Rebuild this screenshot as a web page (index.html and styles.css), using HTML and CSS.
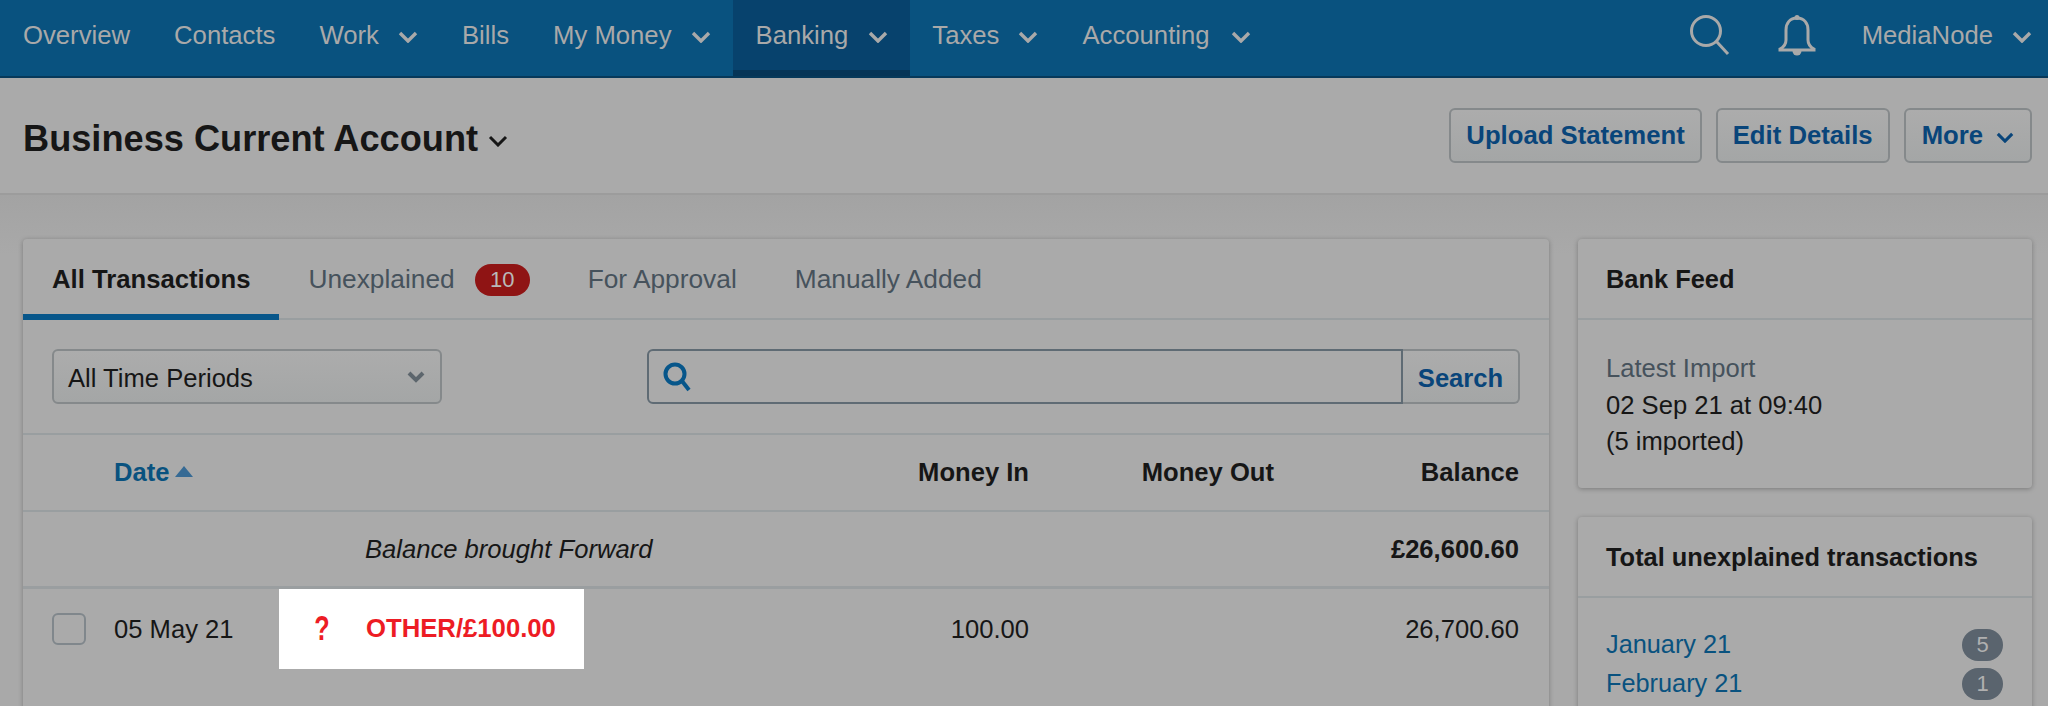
FILE: index.html
```html
<!DOCTYPE html>
<html lang="en">
<head>
<meta charset="utf-8">
<title>Business Current Account</title>
<link rel="stylesheet" href="styles.css">
</head>
<body>
<nav class="topnav">
  <ul class="menu">
    <li class="menu-item">Overview</li>
    <li class="menu-item">Contacts</li>
    <li class="menu-item">Work <svg class="chev" viewBox="0 0 20 12"><path d="M2 2l8 8 8-8"/></svg></li>
    <li class="menu-item">Bills</li>
    <li class="menu-item">My Money <svg class="chev" viewBox="0 0 20 12"><path d="M2 2l8 8 8-8"/></svg></li>
    <li class="menu-item active">Banking <svg class="chev" viewBox="0 0 20 12"><path d="M2 2l8 8 8-8"/></svg></li>
    <li class="menu-item">Taxes <svg class="chev" viewBox="0 0 20 12"><path d="M2 2l8 8 8-8"/></svg></li>
    <li class="menu-item">Accounting <svg class="chev" viewBox="0 0 20 12"><path d="M2 2l8 8 8-8"/></svg></li>
  </ul>
  <div class="nav-right">
    <svg class="nav-search" viewBox="0 0 42 42"><circle cx="17" cy="17" r="14.5"/><path d="M27.5 27.5L39 40"/></svg>
    <svg class="nav-bell" viewBox="0 0 40 42"><path d="M20 4c-7 0-11 5-11 12v10c0 4-2 7-6 9v1h34v-1c-4-2-6-5-6-9V16c0-7-4-12-11-12z"/><circle class="fill" cx="20" cy="3.5" r="2.5"/><path class="fill" d="M15.500 37h9a4.500 4.500 0 0 1-9 0z"/></svg>
    <span class="nav-user">MediaNode <svg class="chev" viewBox="0 0 20 12"><path d="M2 2l8 8 8-8"/></svg></span>
  </div>
</nav>

<header class="titlebar">
  <h1 class="page-title">Business Current Account <svg class="title-chev" viewBox="0 0 20 12"><path d="M2 2l8 8 8-8"/></svg></h1>
  <div class="actions">
    <button class="btn">Upload Statement</button>
    <button class="btn">Edit Details</button>
    <button class="btn btn-more">More <svg class="btn-chev" viewBox="0 0 20 12"><path d="M2 2l8 8 8-8"/></svg></button>
  </div>
</header>

<main class="content">
  <section class="card main-card">
    <div class="tabs">
      <span class="tab current">All Transactions</span>
      <span class="tab">Unexplained <span class="count">10</span></span>
      <span class="tab">For Approval</span>
      <span class="tab">Manually Added</span>
    </div>
    <div class="filters">
      <div class="select"><span class="select-label">All Time Periods</span> <svg class="select-chev" viewBox="0 0 20 14"><path d="M3 3l7 7 7-7"/></svg></div>
      <div class="searchbox">
        <div class="search-input"><svg class="search-icon" viewBox="0 0 28 30"><circle cx="12" cy="12" r="9.500"/><path d="M19 19l7 9"/></svg></div>
        <div class="search-btn">Search</div>
      </div>
    </div>
    <div class="row head">
      <span></span>
      <span class="sort">Date <i class="arrow"></i></span>
      <span></span>
      <span class="num">Money In</span>
      <span class="num">Money Out</span>
      <span class="num">Balance</span>
    </div>
    <div class="row brought">
      <span></span>
      <span></span>
      <span class="desc"><em>Balance brought Forward</em></span>
      <span></span>
      <span></span>
      <span class="num strong">£26,600.60</span>
    </div>
    <div class="row entry">
      <span class="check"><i class="box"></i></span>
      <span>05 May 21</span>
      <span class="highlight"><b class="q">?</b><b class="other">OTHER/£100.00</b></span>
      <span class="num">100.00</span>
      <span></span>
      <span class="num">26,700.60</span>
    </div>
  </section>

  <aside class="side">
    <section class="card">
      <h2 class="card-title">Bank Feed</h2>
      <div class="feed">
        <div class="muted">Latest Import</div>
        <div>02 Sep 21 at 09:40</div>
        <div>(5 imported)</div>
      </div>
    </section>
    <section class="card">
      <h2 class="card-title">Total unexplained transactions</h2>
      <ul class="months">
        <li class="month"><a class="link">January 21</a><span class="pill">5</span></li>
        <li class="month"><a class="link">February 21</a><span class="pill">1</span></li>
      </ul>
    </section>
  </aside>
</main>
</body>
</html>
```
FILE: styles.css
```css
* { box-sizing: border-box; }
html, body { margin: 0; height: 706px; overflow: hidden; }
body {
  background: #a8a8a8;
  font-family: "Liberation Sans", Arial, sans-serif;
  font-size: 25.6px;
  line-height: 39px;
  color: #161616;
}
svg { fill: none; stroke: currentColor; }

.topnav {
  height: 78px;
  background: #09527f;
  border-bottom: 2px solid #07395a;
  display: flex;
  justify-content: space-between;
  color: #a9a9a9;
  font-size: 25.7px;
}
.menu { display: flex; margin: 0; padding: 0 0 0 1px; list-style: none; }
.menu-item { display: flex; align-items: center; padding: 0 22px 6px; gap: 19px; white-space: nowrap; }
.menu-item:last-child { gap: 21px; }
.menu-item.active { background: #07426d; border-bottom: 6px solid #063557; padding: 0 22px 0 23px; gap: 20px; }
.chev { width: 20px; height: 12px; stroke-width: 3.4; margin-top: 3px; }
.nav-right { display: flex; align-items: center; padding: 0 14px 6px 0; margin-right: 2px; }
.nav-search { width: 42px; height: 42px; stroke-width: 3; margin-right: 46px; }
.nav-bell { width: 40px; height: 42px; stroke-width: 3; margin-right: 45px; }
.nav-bell .fill { fill: currentColor; stroke: none; }
.nav-user { display: flex; align-items: center; gap: 19px; }

.titlebar {
  height: 117px;
  padding: 31px 16px 0 23px;
  display: flex;
  justify-content: space-between;
  align-items: flex-start;
  background: #aaaaaa;
  border-bottom: 2px solid #9c9c9c;
}
.page-title { margin: 0; font-size: 36.2px; line-height: 60px; font-weight: 700; display: flex; align-items: center; gap: 10px; }
.title-chev { width: 20px; height: 12px; stroke-width: 3; margin-top: 3px; }
.actions { display: flex; gap: 14px; margin-top: -1px; }
.btn {
  height: 55px;
  padding: 0 15px;
  font: 700 25.7px "Liberation Sans", Arial, sans-serif;
  color: #09457a;
  background: linear-gradient(#acacac, #a4a6a6);
  border: 2px solid #85898b;
  border-radius: 6px;
  display: flex;
  align-items: center;
  gap: 13px;
}
.btn-more { padding: 0 16px; }
.btn-chev { width: 18px; height: 11px; stroke-width: 3.4; margin-top: 3px; }

.content {
  display: flex;
  align-items: flex-start;
  gap: 29px;
  padding: 44px 16px 0 23px;
  background: linear-gradient(#a3a3a3, #a9a9a9 60px);
}
.card {
  background: #aaaaaa;
  border-radius: 4px;
  box-shadow: 0 1px 5px rgba(0,0,0,.28);
}
.main-card { width: 1526px; height: 600px; }

.tabs { height: 81px; display: flex; border-bottom: 2px solid #999ea0; }
.tab { display: flex; align-items: center; padding: 0 29px; gap: 20px; color: #46525c; white-space: nowrap; margin-bottom: -2px; font-size: 26.3px; }
.tab:nth-child(1) { color: #161616; font-weight: 700; font-size: 25.7px; border-bottom: 6px solid #07568a; padding-top: 6px; }
.count { background: #8f1414; color: #b9b9b9; width: 55px; height: 32px; line-height: 32px; font-size: 22px; text-align: center; border-radius: 16px; }

.filters { height: 115px; display: flex; justify-content: space-between; align-items: center; padding: 0 29px; border-bottom: 2px solid #999ea0; }
.select {
  width: 390px; height: 55px; padding: 0 14px;
  display: flex; justify-content: space-between; align-items: center;
  background: linear-gradient(#acacac, #a4a6a6);
  border: 2px solid #85898b; border-radius: 6px;
}
.select-label { padding-top: 4px; }
.select-chev { width: 20px; height: 14px; color: #5d666d; stroke-width: 4; }
.searchbox { width: 873px; height: 55px; display: flex; }
.search-input { flex: 1; border: 2px solid #5f6b74; border-radius: 6px 0 0 6px; display: flex; align-items: center; padding-left: 14px; }
.search-icon { width: 28px; height: 30px; color: #07568a; stroke-width: 4; }
.search-btn { width: 117px; padding-top: 4px; display: flex; align-items: center; justify-content: center; font-weight: 700; color: #09457a; border: 2px solid #85898b; border-left: 0; border-radius: 0 6px 6px 0; background: linear-gradient(#acacac, #a4a6a6); }

.row { display: grid; grid-template-columns: 91px 165px 305px 445px 245px 245px; align-items: center; }
.row.head { height: 77px; font-weight: 700; border-bottom: 2px solid #999ea0; }
.row.brought { height: 77px; border-bottom: 3px solid #9a9ea0; }
.row.entry { height: 80px; }
.num { text-align: right; }
.strong { font-weight: 700; }
.sort { color: #09527f; display: flex; align-items: center; gap: 5px; white-space: nowrap; }
.arrow { width: 0; height: 0; margin-left: 1px; border-left: 9px solid transparent; border-right: 9px solid transparent; border-bottom: 11px solid #366a94; margin-bottom: 3px; }
.desc { padding-left: 86px; white-space: nowrap; }
.check { padding-left: 29px; display: flex; }
.box { width: 34px; height: 32px; border: 2px solid #80878c; border-radius: 6px; }
.highlight { height: 80px; background: #fff; color: #ed1c24; display: flex; align-items: center; padding-left: 33px; white-space: nowrap; font-size: 25.7px; }
.q { width: 54px; font-size: 35px; padding-left: 3px; margin-top: -3px; transform: scaleX(.72); transform-origin: left center; }
.other { margin-top: -1px; }

.side { width: 454px; display: flex; flex-direction: column; gap: 29px; }
.card-title { margin: 0; height: 81px; padding: 2px 28px 0; display: flex; align-items: center; font-size: 25.4px; font-weight: 700; border-bottom: 2px solid #999ea0; }
.feed { padding: 30px 28px 27px; line-height: 36.5px; height: 168px; }
.muted { color: #46525c; }
.months { list-style: none; margin: 0; padding: 27px 28px; }
.month { display: flex; justify-content: space-between; align-items: center; height: 39px; padding-right: 1px; }
.link { color: #09527f; font-size: 25.3px; }
.pill { width: 41px; height: 32px; border-radius: 16px; background: #5a646e; color: #b0b0b0; font-size: 22px; line-height: 32px; text-align: center; }
```
